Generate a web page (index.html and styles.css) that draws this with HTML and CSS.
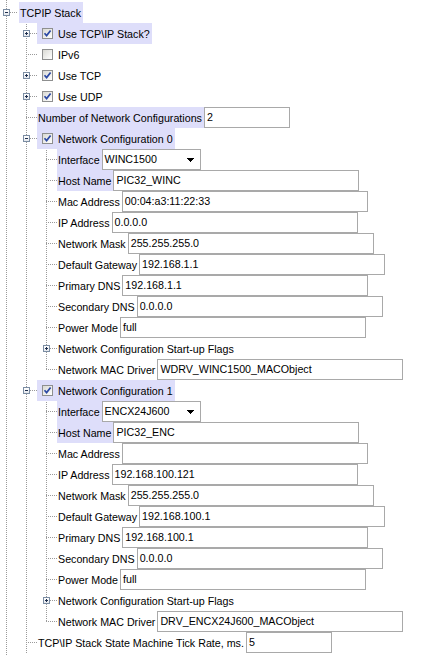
FILE: index.html
```html
<!DOCTYPE html>
<html>
<head>
<meta charset="utf-8">
<title>TCPIP Stack</title>
<link rel="stylesheet" href="styles.css">
</head>
<body>
<div class="tree">
  <div class="row"><span class="n n0"><i class="ex minus"></i></span><span class="hl top">TCPIP Stack</span></div>

  <div class="row"><span class="sp"></span><span class="n t1"><i class="ex plus"></i></span><span class="hl"><span class="cb"><svg viewBox="0 0 9 9"><path d="M1.5 4.2 L3.6 6.6 L7.6 1.4"/></svg></span>Use TCP\IP Stack?</span></div>
  <div class="row"><span class="sp"></span><span class="n t1"></span><span class="lbl"><span class="cb"></span>IPv6</span></div>
  <div class="row"><span class="sp"></span><span class="n t1"><i class="ex plus"></i></span><span class="lbl"><span class="cb"><svg viewBox="0 0 9 9"><path d="M1.5 4.2 L3.6 6.6 L7.6 1.4"/></svg></span>Use TCP</span></div>
  <div class="row"><span class="sp"></span><span class="n t1"><i class="ex plus"></i></span><span class="lbl"><span class="cb"><svg viewBox="0 0 9 9"><path d="M1.5 4.2 L3.6 6.6 L7.6 1.4"/></svg></span>Use UDP</span></div>
  <div class="row"><span class="sp"></span><span class="n t1"></span><span class="hl">Number of Network Configurations</span><div class="f s">2</div></div>

  <div class="row"><span class="sp"></span><span class="n t1"><i class="ex minus"></i></span><span class="hl"><span class="cb"><svg viewBox="0 0 9 9"><path d="M1.5 4.2 L3.6 6.6 L7.6 1.4"/></svg></span>Network Configuration 0</span></div>
  <div class="row"><span class="sp"></span><span class="sp v1"></span><span class="n t2"></span><span class="hl">Interface</span><div class="f dd"><span>WINC1500</span><svg class="arr" viewBox="0 0 7 4"><path d="M0 0h7v1H0zM1 1h5v1H1zM2 2h3v1H2zM3 3h1v1H3z"/></svg></div></div>
  <div class="row"><span class="sp"></span><span class="sp v1"></span><span class="n t2"></span><span class="hl">Host Name</span><div class="f">PIC32_WINC</div></div>
  <div class="row"><span class="sp"></span><span class="sp v1"></span><span class="n t2"></span><span class="lbl">Mac Address</span><div class="f">00:04:a3:11:22:33</div></div>
  <div class="row"><span class="sp"></span><span class="sp v1"></span><span class="n t2"></span><span class="lbl">IP Address</span><div class="f">0.0.0.0</div></div>
  <div class="row"><span class="sp"></span><span class="sp v1"></span><span class="n t2"></span><span class="lbl">Network Mask</span><div class="f">255.255.255.0</div></div>
  <div class="row"><span class="sp"></span><span class="sp v1"></span><span class="n t2"></span><span class="lbl">Default Gateway</span><div class="f">192.168.1.1</div></div>
  <div class="row"><span class="sp"></span><span class="sp v1"></span><span class="n t2"></span><span class="lbl">Primary DNS</span><div class="f">192.168.1.1</div></div>
  <div class="row"><span class="sp"></span><span class="sp v1"></span><span class="n t2"></span><span class="lbl">Secondary DNS</span><div class="f">0.0.0.0</div></div>
  <div class="row"><span class="sp"></span><span class="sp v1"></span><span class="n t2"></span><span class="lbl">Power Mode</span><div class="f">full</div></div>
  <div class="row"><span class="sp"></span><span class="sp v1"></span><span class="n t2"><i class="ex plus"></i></span><span class="lbl">Network Configuration Start-up Flags</span></div>
  <div class="row"><span class="sp"></span><span class="sp v1"></span><span class="n l2"></span><span class="lbl">Network MAC Driver</span><div class="f">WDRV_WINC1500_MACObject</div></div>

  <div class="row"><span class="sp"></span><span class="n t1"><i class="ex minus"></i></span><span class="hl"><span class="cb"><svg viewBox="0 0 9 9"><path d="M1.5 4.2 L3.6 6.6 L7.6 1.4"/></svg></span>Network Configuration 1</span></div>
  <div class="row"><span class="sp"></span><span class="sp v1"></span><span class="n t2"></span><span class="hl">Interface</span><div class="f dd"><span>ENCX24J600</span><svg class="arr" viewBox="0 0 7 4"><path d="M0 0h7v1H0zM1 1h5v1H1zM2 2h3v1H2zM3 3h1v1H3z"/></svg></div></div>
  <div class="row"><span class="sp"></span><span class="sp v1"></span><span class="n t2"></span><span class="hl">Host Name</span><div class="f">PIC32_ENC</div></div>
  <div class="row"><span class="sp"></span><span class="sp v1"></span><span class="n t2"></span><span class="lbl">Mac Address</span><div class="f"></div></div>
  <div class="row"><span class="sp"></span><span class="sp v1"></span><span class="n t2"></span><span class="lbl">IP Address</span><div class="f">192.168.100.121</div></div>
  <div class="row"><span class="sp"></span><span class="sp v1"></span><span class="n t2"></span><span class="lbl">Network Mask</span><div class="f">255.255.255.0</div></div>
  <div class="row"><span class="sp"></span><span class="sp v1"></span><span class="n t2"></span><span class="lbl">Default Gateway</span><div class="f">192.168.100.1</div></div>
  <div class="row"><span class="sp"></span><span class="sp v1"></span><span class="n t2"></span><span class="lbl">Primary DNS</span><div class="f">192.168.100.1</div></div>
  <div class="row"><span class="sp"></span><span class="sp v1"></span><span class="n t2"></span><span class="lbl">Secondary DNS</span><div class="f">0.0.0.0</div></div>
  <div class="row"><span class="sp"></span><span class="sp v1"></span><span class="n t2"></span><span class="lbl">Power Mode</span><div class="f">full</div></div>
  <div class="row"><span class="sp"></span><span class="sp v1"></span><span class="n t2"><i class="ex plus"></i></span><span class="lbl">Network Configuration Start-up Flags</span></div>
  <div class="row"><span class="sp"></span><span class="sp v1"></span><span class="n l2"></span><span class="lbl">Network MAC Driver</span><div class="f">DRV_ENCX24J600_MACObject</div></div>

  <div class="row"><span class="sp"></span><span class="n t1"></span><span class="lbl">TCP\IP Stack State Machine Tick Rate, ms.</span><div class="f s">5</div></div>
</div>
</body>
</html>
```
FILE: styles.css
```css
html, body {
  margin: 0;
  padding: 0;
  background: #ffffff;
}

body {
  font-family: "Liberation Sans", Arial, sans-serif;
  font-size: 10.7px;
  color: #000000;
}

.tree {
  padding-top: 2px;
  min-height: 653px;
  background: repeating-linear-gradient(to bottom, #9a9a9a 0 1px, transparent 1px 2px) 6px 0 / 1px 100% no-repeat fixed;
}

.row {
  display: flex;
  align-items: center;
  height: 21px;
}

.sp {
  flex: none;
  width: 20px;
  height: 21px;
}

.sp.v1 {
  background: repeating-linear-gradient(to bottom, #9a9a9a 0 1px, transparent 1px 2px) 26px 0 / 1px 100% no-repeat fixed;
}

.n {
  flex: none;
  width: 17px;
  height: 21px;
  box-sizing: border-box;
  padding-left: 3px;
  display: flex;
  align-items: center;
}

.n0 {
  background: repeating-linear-gradient(to right, #9a9a9a 0 1px, transparent 1px 2px) 6px 10px / 11px 1px no-repeat;
}

.t1 {
  background:
    repeating-linear-gradient(to right, #9a9a9a 0 1px, transparent 1px 2px) 6px 10px / 11px 1px no-repeat scroll,
    repeating-linear-gradient(to bottom, #9a9a9a 0 1px, transparent 1px 2px) 26px 0 / 1px 100% no-repeat fixed;
}

.t2 {
  background:
    repeating-linear-gradient(to right, #9a9a9a 0 1px, transparent 1px 2px) 6px 10px / 11px 1px no-repeat scroll,
    repeating-linear-gradient(to bottom, #9a9a9a 0 1px, transparent 1px 2px) 46px 0 / 1px 100% no-repeat fixed;
}

.l2 {
  background:
    repeating-linear-gradient(to right, #9a9a9a 0 1px, transparent 1px 2px) 6px 10px / 11px 1px no-repeat,
    repeating-linear-gradient(to bottom, transparent 0 1px, #9a9a9a 1px 2px) 6px 0 / 1px 11px no-repeat;
}

.ex {
  display: block;
  flex: none;
  width: 7px;
  height: 7px;
  box-sizing: border-box;
  border: 1px solid #7b8da3;
}

.ex.minus {
  background:
    linear-gradient(#1f2f4f, #1f2f4f) 1px 2px / 3px 1px no-repeat,
    linear-gradient(#ffffff, #e4e7ec);
}

.ex.plus {
  background:
    linear-gradient(#1f2f4f, #1f2f4f) 1px 2px / 3px 1px no-repeat,
    linear-gradient(#1f2f4f, #1f2f4f) 2px 1px / 1px 3px no-repeat,
    linear-gradient(#ffffff, #e4e7ec);
}

.hl, .lbl {
  flex: none;
  display: flex;
  align-items: center;
  height: 21px;
  padding: 0 2px 0 1px;
  white-space: nowrap;
}

.hl {
  background: #dedefa;
}

.hl.top {
  margin-left: 2px;
}

.cb {
  flex: none;
  width: 11px;
  height: 11px;
  box-sizing: border-box;
  border: 1px solid #8e8f8f;
  background: linear-gradient(135deg, #d9d9d4 0%, #f4f4f2 70%, #ffffff 100%);
  margin: 0 5px 0 4px;
  display: flex;
}

.cb svg {
  width: 9px;
  height: 9px;
}

.cb path {
  fill: none;
  stroke: #2b48a4;
  stroke-width: 1.7;
}

.f {
  flex: none;
  box-sizing: border-box;
  width: 246px;
  height: 21px;
  border: 1px solid #a9a9a9;
  background: #ffffff;
  padding-left: 2px;
  line-height: 19px;
  white-space: nowrap;
  overflow: hidden;
}

.f.s {
  width: 86px;
}

.f.dd {
  width: 99px;
  display: flex;
  align-items: center;
  justify-content: space-between;
  padding-right: 6px;
}

.arr {
  width: 7px;
  height: 4px;
  fill: #000000;
  shape-rendering: crispEdges;
}
```
